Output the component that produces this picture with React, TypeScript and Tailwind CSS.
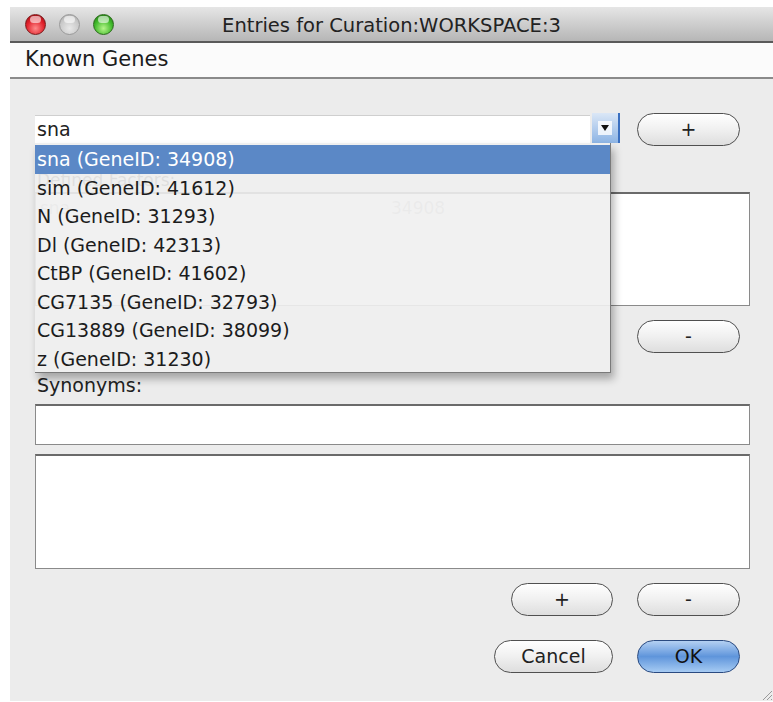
import React from 'react';

const FONT = { fontFamily: '"DejaVu Sans", "Open Sans", sans-serif' };

const genes = [
  { symbol: 'sna', id: '34908' },
  { symbol: 'sim', id: '41612' },
  { symbol: 'N', id: '31293' },
  { symbol: 'Dl', id: '42313' },
  { symbol: 'CtBP', id: '41602' },
  { symbol: 'CG7135', id: '32793' },
  { symbol: 'CG13889', id: '38099' },
  { symbol: 'z', id: '31230' },
];

// Aqua-style pill button
const PillButton: React.FC<{ label: string; primary?: boolean; className?: string }> = ({
  label,
  primary,
  className = '',
}) => (
  <button
    className={`h-[33px] rounded-full border-[1.5px] text-[19px] leading-none flex items-center justify-center ${
      primary
        ? 'border-[#2a4a80] bg-gradient-to-b from-[#b4d0f2] via-[#5f95db] to-[#a6cbf3] text-[#111]'
        : 'border-[#505050] bg-gradient-to-b from-[#ffffff] via-[#f0f0f0] to-[#dedede] text-[#222]'
    } ${className}`}
  >
    {label}
  </button>
);

const TrafficLight: React.FC<{ tone: 'red' | 'gray' | 'green' }> = ({ tone }) => {
  const tones = {
    red: 'bg-[radial-gradient(circle_at_50%_70%,#ff8a8a_0%,#e0202a_55%,#8c0a10_100%)] border-[#7a1a1a]',
    gray: 'bg-[radial-gradient(circle_at_50%_70%,#e8e8e8_0%,#c8c8c8_60%,#9c9c9c_100%)] border-[#9a9a9a]',
    green: 'bg-[radial-gradient(circle_at_50%_70%,#b6f58a_0%,#3fb82a_55%,#1c6a10_100%)] border-[#2a6a1a]',
  };
  return (
    <div className={`w-[21px] h-[21px] rounded-full border relative ${tones[tone]}`}>
      <div className="absolute left-[4px] top-[1px] w-[11px] h-[7px] rounded-full bg-white/60" />
    </div>
  );
};

export default function App() {
  return (
    <div className="w-[773px] h-[702px] bg-white overflow-hidden pl-[10px] pt-[7px]" style={FONT}>
      <div className="w-[763px] h-[694px] bg-[#ececec] flex flex-col">
        {/* title bar */}
        <div className="h-[36px] shrink-0 relative flex items-center bg-gradient-to-b from-[#e6e6e6] to-[#b6b6b6] border-b-2 border-[#5a5a5a]">
          <div className="flex items-center gap-[13px] pl-[15px]">
            <TrafficLight tone="red" />
            <TrafficLight tone="gray" />
            <TrafficLight tone="green" />
          </div>
          <div className="absolute inset-x-0 top-[4px] text-center text-[19.5px] text-[#222]">
            Entries for Curation:WORKSPACE:3
          </div>
        </div>

        {/* section header */}
        <div className="h-[36px] shrink-0 bg-[#fbfbfb] border-b-2 border-[#8a8a8a] flex items-center pl-[15px] text-[21px] text-[#1c1c1c]">
          Known Genes
        </div>

        {/* form */}
        <div className="relative pl-[25px] pt-[34px] text-[#222]">
          <div className="flex items-start w-[715px] h-[33px]">
            <div className="w-[555px] h-[28px] mt-[2px] bg-white border-t border-[#cfcfcf] flex items-center pl-[2px] text-[19px]">
              sna
            </div>
            <div className="w-[28px] h-[30px] ml-[2px] bg-gradient-to-b from-[#dbe7f6] to-[#8db4e4] border-r-2 border-[#3a6fc0] flex items-center justify-center">
              <div className="w-[14px] h-[14px] bg-white/80 flex items-center justify-center">
                <div className="w-0 h-0 border-l-[4px] border-r-[4px] border-t-[6px] border-l-transparent border-r-transparent border-t-[#111]" />
              </div>
            </div>
            <PillButton label="+" className="w-[103px] ml-auto mr-[10px]" />
          </div>

          <div className="mt-[22px] text-[17px] text-[#444] h-[22px] pl-[2px]">Defined Factors:</div>

          <div className="mt-[2px] w-[715px] h-[114px] bg-white border border-[#8a8a8a] border-t-2 border-t-[#6a6a6a]">
            <div className="flex text-[17px] text-[#bbb] pt-[2px]">
              <span className="w-[355px] pl-[4px]">sna</span>
              <span>34908</span>
            </div>
          </div>

          <div className="flex justify-end w-[715px] mt-[14px]">
            <PillButton label="-" className="w-[103px] mr-[10px]" />
          </div>

          <div className="mt-[21px] text-[19px] h-[22px] leading-[22px] pl-[2px]">Synonyms:</div>

          <div className="mt-[8px] w-[715px] h-[41px] bg-white border border-[#8a8a8a] border-t-2 border-t-[#6a6a6a]" />

          <div className="mt-[9px] w-[715px] h-[115px] bg-white border border-[#8a8a8a] border-t-2 border-t-[#6a6a6a]" />

          <div className="flex justify-end gap-[24px] w-[715px] mt-[14px] pr-[10px]">
            <PillButton label="+" className="w-[102px]" />
            <PillButton label="-" className="w-[103px]" />
          </div>

          <div className="flex justify-end gap-[24px] w-[715px] mt-[24px] pr-[10px]">
            <PillButton label="Cancel" className="w-[119px]" />
            <PillButton label="OK" primary className="w-[103px]" />
          </div>

          {/* open combo list */}
          <div className="absolute left-[25px] top-[64px] w-[576px] h-[230px] bg-[#efefef]/90 border-r border-b border-[#7a7a7a] shadow-[3px_6px_8px_rgba(0,0,0,0.3)] pt-[2px]">
            {genes.map((g, i) => (
              <div
                key={g.symbol}
                className={`h-[28.5px] flex items-center pl-[2px] text-[19px] ${
                  i === 0 ? 'bg-[#5b88c6] text-white' : 'text-[#1c1c1c]'
                }`}
              >
                {g.symbol} (GeneID: {g.id})
              </div>
            ))}
          </div>
        </div>

        {/* resize grip */}
        <div className="flex-1 relative">
          <svg className="absolute right-0 bottom-0" width="14" height="14" viewBox="0 0 14 14">
            <path d="M13 4 L4 13 M13 8 L8 13 M13 12 L12 13" stroke="#9a9a9a" strokeWidth="1" />
          </svg>
        </div>
      </div>
    </div>
  );
}
